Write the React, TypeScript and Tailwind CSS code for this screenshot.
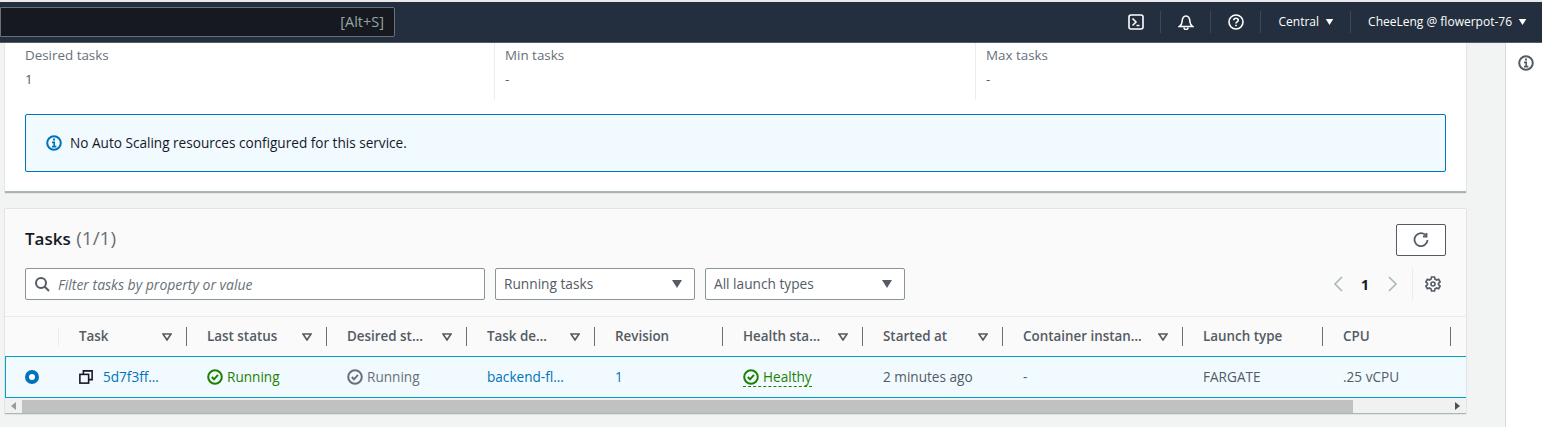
import type { ReactNode } from 'react'

const font = { fontFamily: '"Open Sans", sans-serif' }

function Caret({ className }: { className: string }) {
  return (
    <svg viewBox="0 0 10 8" className={className} fill="currentColor">
      <path d="M0 0h10L5 8z" />
    </svg>
  )
}

function SortIcon() {
  return (
    <svg viewBox="0 0 10 8" className="w-[10px] h-[8px] text-[#545b64] shrink-0" fill="none" stroke="currentColor" strokeWidth="1.6">
      <path d="M1 1h8L5 7z" />
    </svg>
  )
}

function CheckCircle({ className }: { className: string }) {
  return (
    <svg viewBox="0 0 16 16" className={className} fill="none" stroke="currentColor" strokeWidth="2">
      <circle cx="8" cy="8" r="6.8" />
      <path d="M4.8 8l2.2 2.3 4-4.4" />
    </svg>
  )
}

function InfoIcon({ className }: { className: string }) {
  return (
    <svg viewBox="0 0 16 16" className={className} fill="none" stroke="currentColor" strokeWidth="2">
      <circle cx="8" cy="8" r="6.8" />
      <path d="M6 7.4h2.2v4M6 11.6h4.4" strokeWidth="1.7" />
      <path d="M8 3.6v2" />
    </svg>
  )
}

const headers: { label: string; w: string; sort: boolean }[] = [
  { label: 'Task', w: 'w-[128px]', sort: true },
  { label: 'Last status', w: 'w-[140px]', sort: true },
  { label: 'Desired st…', w: 'w-[140px]', sort: true },
  { label: 'Task de…', w: 'w-[128px]', sort: true },
  { label: 'Revision', w: 'w-[128px]', sort: false },
  { label: 'Health sta…', w: 'w-[140px]', sort: true },
  { label: 'Started at', w: 'w-[140px]', sort: true },
  { label: 'Container instan…', w: 'w-[180px]', sort: true },
  { label: 'Launch type', w: 'w-[140px]', sort: false },
  { label: 'CPU', w: 'w-[128px]', sort: false },
]

function Cell({ w, children }: { w: string; children: ReactNode }) {
  return <div className={`${w} shrink-0 pl-[20px] flex items-center gap-[4px] text-[13.6px]`}>{children}</div>
}

function NavSep() {
  return <div className="w-px h-[22px] bg-[#414750]" />
}

function Stat({ label, value, last }: { label: string; value: string; last?: boolean }) {
  return (
    <div className={`h-[57px] pt-[3px] ${last ? '' : 'border-r border-[#eaeded]'}`}>
      <div className="text-[13.4px] leading-[18px] text-[#687078]">{label}</div>
      <div className="text-[13.4px] leading-[18px] mt-[6px] text-[#545b64]">{value}</div>
    </div>
  )
}

function Select({ label }: { label: string }) {
  return (
    <div className="w-[200px] h-[32px] px-[8px] bg-white border border-[#879596] rounded-[2px] flex items-center justify-between text-[13.7px] text-[#545b64]">
      {label}
      <Caret className="w-[10px] h-[8px] text-[#545b64] mr-[4px]" />
    </div>
  )
}

export default function App() {
  return (
    <div className="w-[1542px] h-[427px] overflow-hidden bg-[#f2f3f3] flex flex-col text-[#16191f]" style={font}>
      <header className="h-[43px] shrink-0 bg-[#232f3e] border-t-[2px] border-t-[#e8eaea] border-b border-b-[#545b64] flex items-center pr-[15px]">
        <div className="w-[395px] h-[30px] bg-[#16191f] border border-[#687078] rounded-r-[2px] flex items-center justify-end pr-[10px] text-[14.5px] text-[#95a5a6]">
          [Alt+S]
        </div>
        <div className="ml-auto flex items-center text-white text-[12px]">
          <svg viewBox="0 0 16 16" className="w-[16px] h-[16px]" fill="none" stroke="currentColor" strokeWidth="1.6">
            <rect x="1" y="1" width="14" height="14" rx="2" />
            <path d="M4.5 4.5L8 8l-3.5 3.5M8.5 11.5h3" />
          </svg>
          <div className="ml-[16px] mr-[17px]"><NavSep /></div>
          <svg viewBox="0 0 16 16" className="w-[16px] h-[16px]" fill="none" stroke="currentColor" strokeWidth="1.6">
            <path d="M1.5 12.5h13c-1.5-1-2.3-2.5-2.5-4.5C11.8 5 11 2 8 2S4.200 5 4 8c-.2 2-1 3.500-2.500 4.500z" />
            <path d="M6 13.500a2 2 0 0 0 4 0" />
          </svg>
          <div className="ml-[16px] mr-[17px]"><NavSep /></div>
          <svg viewBox="0 0 16 16" className="w-[16px] h-[16px]" fill="none" stroke="currentColor" strokeWidth="1.6">
            <circle cx="8" cy="8" r="7" />
            <path d="M5.800 6.200C5.800 4.900 6.800 4.200 8 4.200s2.200.8 2.200 2c0 1.700-2.200 1.600-2.200 3.300" />
            <path d="M8 10.800v1.400" />
          </svg>
          <div className="ml-[16px] mr-[18px]"><NavSep /></div>
          <span>Central</span>
          <Caret className="w-[9px] h-[6px] ml-[6px]" />
          <div className="ml-[16px] mr-[17px]"><NavSep /></div>
          <span>CheeLeng @ flowerpot-76</span>
          <Caret className="w-[9px] h-[6px] ml-[6px]" />
        </div>
      </header>

      <div className="flex flex-1 min-h-0">
        <main className="w-[1505px] shrink-0 pl-[5px] pr-[39px]">
          <section className="h-[149px] bg-white border-b border-[#aab7b8] shadow-[0_1px_1px_rgba(0,28,36,0.3)] px-[20px]">
            <div className="grid grid-cols-3 gap-x-[10px]" style={{ gridTemplateColumns: '470px 471px 1fr' }}>
              <Stat label="Desired tasks" value="1" />
              <Stat label="Min tasks" value="-" />
              <Stat label="Max tasks" value="-" last />
            </div>
            <div className="mt-[14px] h-[58px] bg-[#f1faff] border border-[#0073bb] rounded-[2px] flex items-center pl-[20px] text-[13.6px]">
              <InfoIcon className="w-[16px] h-[16px] text-[#0073bb]" />
              <span className="ml-[8px] mt-[1px] text-[#16191f]">No Auto Scaling resources configured for this service.</span>
            </div>
          </section>

          <section className="mt-[17px] h-[205px] bg-white border-b border-[#aab7b8] shadow-[0_0_1px_rgba(0,28,36,0.4)] overflow-hidden">
            <div className="h-[108px] bg-[#fafafa] border-b border-[#eaeded] px-[20px]">
              <div className="h-[59px] flex items-end justify-between">
                <h2 className="text-[17px] leading-[22px] font-semibold mb-[18px] text-[#16191f]">
                  Tasks <span className="ml-[1px] text-[19px] font-normal text-[#687078]">(1/1)</span>
                </h2>
                <div className="w-[50px] h-[32px] mb-[12px] bg-white border border-[#545b64] rounded-[2px] flex items-center justify-center text-[#545b64]">
                  <svg viewBox="0 0 16 16" className="w-[16px] h-[16px]" fill="none" stroke="currentColor" strokeWidth="1.800">
                    <path d="M13 3.500A6.500 6.500 0 1 0 14.500 8" />
                    <path d="M13.500 1v3.500H10" />
                  </svg>
                </div>
              </div>
              <div className="flex items-center">
                <div className="w-[460px] h-[32px] px-[8px] bg-white border border-[#879596] rounded-[2px] flex items-center text-[14px] italic text-[#687078]">
                  <svg viewBox="0 0 16 16" className="w-[16px] h-[16px] text-[#545b64]" fill="none" stroke="currentColor" strokeWidth="2">
                    <circle cx="7" cy="7" r="5" />
                    <path d="M10.500 10.500L15 15" />
                  </svg>
                  <span className="ml-[8px]">Filter tasks by property or value</span>
                </div>
                <div className="ml-[10px]"><Select label="Running tasks" /></div>
                <div className="ml-[10px]"><Select label="All launch types" /></div>
                <div className="ml-auto flex items-center">
                  <svg viewBox="0 0 10 16" className="w-[10px] h-[16px] text-[#aab7b8]" fill="none" stroke="currentColor" strokeWidth="1.600">
                    <path d="M9 1L2 8l7 7" />
                  </svg>
                  <span className="ml-[18px] text-[14px] font-bold text-[#16191f]">1</span>
                  <svg viewBox="0 0 10 16" className="ml-[19px] w-[10px] h-[16px] text-[#aab7b8]" fill="none" stroke="currentColor" strokeWidth="1.600">
                    <path d="M1 1l7 7-7 7" />
                  </svg>
                  <div className="ml-[14px] w-px h-[32px] bg-[#eaeded]" />
                  <svg viewBox="0 0 16 16" className="ml-[12px] mr-[5px] w-[16px] h-[16px] text-[#545b64]" fill="none" stroke="currentColor" strokeWidth="1.600">
                    <path d="M6.500 1h3l.4 2 1.700 1 2-.7 1.500 2.600-1.600 1.400v1.400l1.600 1.400-1.500 2.600-2-.7-1.700 1-.4 2h-3l-.4-2-1.700-1-2 .7L.9 10.100l1.600-1.400V7.300L.9 5.900l1.500-2.600 2 .7 1.700-1z" />
                    <circle cx="8" cy="8" r="2" />
                  </svg>
                </div>
              </div>
            </div>

            <div className="h-[39px] bg-[#fafafa] flex items-center font-semibold text-[#545b64]">
              <div className="w-[54px] shrink-0 h-[19px] border-r border-[#eaeded]" />
              {headers.map((h) => (
                <div key={h.label} className={`${h.w} shrink-0 h-[19px] pl-[20px] pr-[14px] flex items-center justify-between border-r border-[#687078] text-[13.4px] whitespace-nowrap`}>
                  <span>{h.label}</span>
                  {h.sort && <SortIcon />}
                </div>
              ))}
            </div>

            <div className="h-[42px] bg-[#f1faff] border-y border-[#00a1c9] border-l flex items-center text-[#545b64]">
              <div className="w-[53px] shrink-0 pl-[19px]">
                <div className="w-[14px] h-[14px] rounded-full border-[4px] border-[#0073bb] bg-white" />
              </div>
              <Cell w="w-[128px]">
                <svg viewBox="0 0 16 16" className="w-[14px] h-[14px] text-[#16191f] mr-[6px]" fill="none" stroke="currentColor" strokeWidth="1.800">
                  <rect x="1" y="5" width="10" height="10" />
                  <path d="M5 5V1h10v10h-4" />
                </svg>
                <span className="text-[#0073bb]">5d7f3ff…</span>
              </Cell>
              <Cell w="w-[140px]">
                <CheckCircle className="w-[16px] h-[16px] text-[#1d8102]" />
                <span className="text-[#1d8102]">Running</span>
              </Cell>
              <Cell w="w-[140px]">
                <CheckCircle className="w-[16px] h-[16px] text-[#687078]" />
                <span className="text-[#687078]">Running</span>
              </Cell>
              <Cell w="w-[128px]">
                <span className="text-[#0073bb]">backend-fl…</span>
              </Cell>
              <Cell w="w-[128px]">
                <span className="text-[#0073bb]">1</span>
              </Cell>
              <Cell w="w-[140px]">
                <span className="flex items-center gap-[4px] text-[#1d8102] border-b border-dashed border-[#1d8102] leading-[19px]">
                  <CheckCircle className="w-[16px] h-[16px]" />
                  Healthy
                </span>
              </Cell>
              <Cell w="w-[140px]">2 minutes ago</Cell>
              <Cell w="w-[180px]">-</Cell>
              <Cell w="w-[140px]">FARGATE</Cell>
              <Cell w="w-[128px]">.25 vCPU</Cell>
            </div>

            <div className="h-[16px] bg-[#f1f1f1] flex items-center">
              <div className="w-[17px] flex justify-center text-[#9b9b9b]">
                <svg viewBox="0 0 5 8" className="w-[5px] h-[8px]" fill="currentColor"><path d="M5 0v8L0 4z" /></svg>
              </div>
              <div className="w-[1331px] h-[13px] bg-[#c1c1c1]" />
              <div className="ml-auto w-[17px] flex justify-center text-[#505050]">
                <svg viewBox="0 0 5 8" className="w-[5px] h-[8px]" fill="currentColor"><path d="M0 0v8l5-4z" /></svg>
              </div>
            </div>
          </section>
        </main>

        <aside className="flex-1 bg-white border-l border-[#d5dbdb] pl-[12px] pt-[12px]">
          <InfoIcon className="w-[16px] h-[16px] text-[#545b64]" />
        </aside>
      </div>
    </div>
  )
}
